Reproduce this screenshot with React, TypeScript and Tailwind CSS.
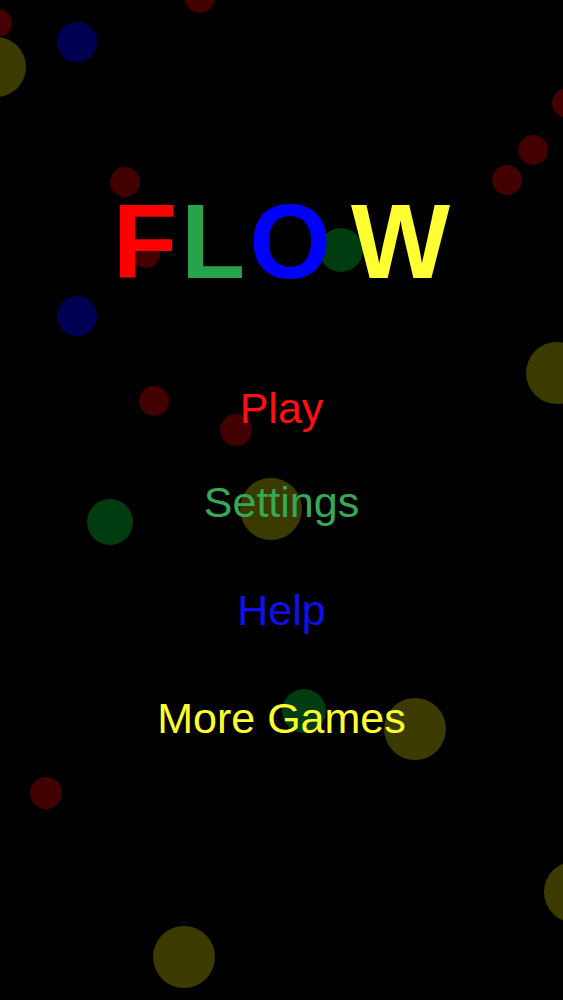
import React from "react";

type Dot = { x: number; y: number; r: number; c: string };

const RED = "#420000";
const BLUE = "#000052";
const YEL = "#3b3a00";
const GRN = "#003c10";

const dots: Dot[] = [
  { x: 200, y: -2, r: 15, c: RED },
  { x: -2, y: 23, r: 14, c: RED },
  { x: 567, y: 103, r: 15, c: RED },
  { x: 533, y: 150, r: 15, c: RED },
  { x: 507, y: 180, r: 15, c: RED },
  { x: 125, y: 182, r: 15, c: RED },
  { x: 146, y: 254, r: 14, c: RED },
  { x: 154, y: 401, r: 15, c: RED },
  { x: 236, y: 430, r: 16, c: RED },
  { x: 46, y: 793, r: 16, c: RED },
  { x: 77, y: 42, r: 20, c: BLUE },
  { x: 77, y: 316, r: 20, c: BLUE },
  { x: -4, y: 67, r: 30, c: YEL },
  { x: 557, y: 373, r: 31, c: YEL },
  { x: 271, y: 509, r: 31, c: YEL },
  { x: 415, y: 729, r: 31, c: YEL },
  { x: 184, y: 957, r: 31, c: YEL },
  { x: 575, y: 892, r: 31, c: YEL },
  { x: 341, y: 250, r: 22, c: GRN },
  { x: 110, y: 522, r: 23, c: GRN },
  { x: 304, y: 711, r: 22, c: GRN },
];

export default function App() {
  return (
    <div className="relative w-full h-[1000px] bg-black overflow-hidden font-[family-name:'Liberation_Sans',Arial,sans-serif]">
      {dots.map((d, i) => (
        <div
          key={i}
          className="absolute rounded-full"
          style={{
            left: d.x - d.r,
            top: d.y - d.r,
            width: d.r * 2,
            height: d.r * 2,
            backgroundColor: d.c,
          }}
        />
      ))}
      <div className="relative flex flex-col items-center">
        <div className="mt-[189px] flex justify-center font-bold text-[105px] leading-none">
          <span className="text-[#ff0000]">F</span>
          <span className="ml-[4px] text-[#26a34b]">L</span>
          <span className="ml-[4px] text-[#0000ff]">O</span>
          <span className="ml-[20px] text-[#ffff33]">W</span>
        </div>
        <div className="mt-[93px] text-[43px] leading-none text-[#ff1010]">Play</div>
        <div className="mt-[51px] text-[43px] leading-none text-[#36a957]">Settings</div>
        <div className="mt-[65px] text-[43px] leading-none text-[#1010ee]">Help</div>
        <div className="mt-[65px] text-[43px] leading-none text-[#ffff2e]">More Games</div>
      </div>
    </div>
  );
}
